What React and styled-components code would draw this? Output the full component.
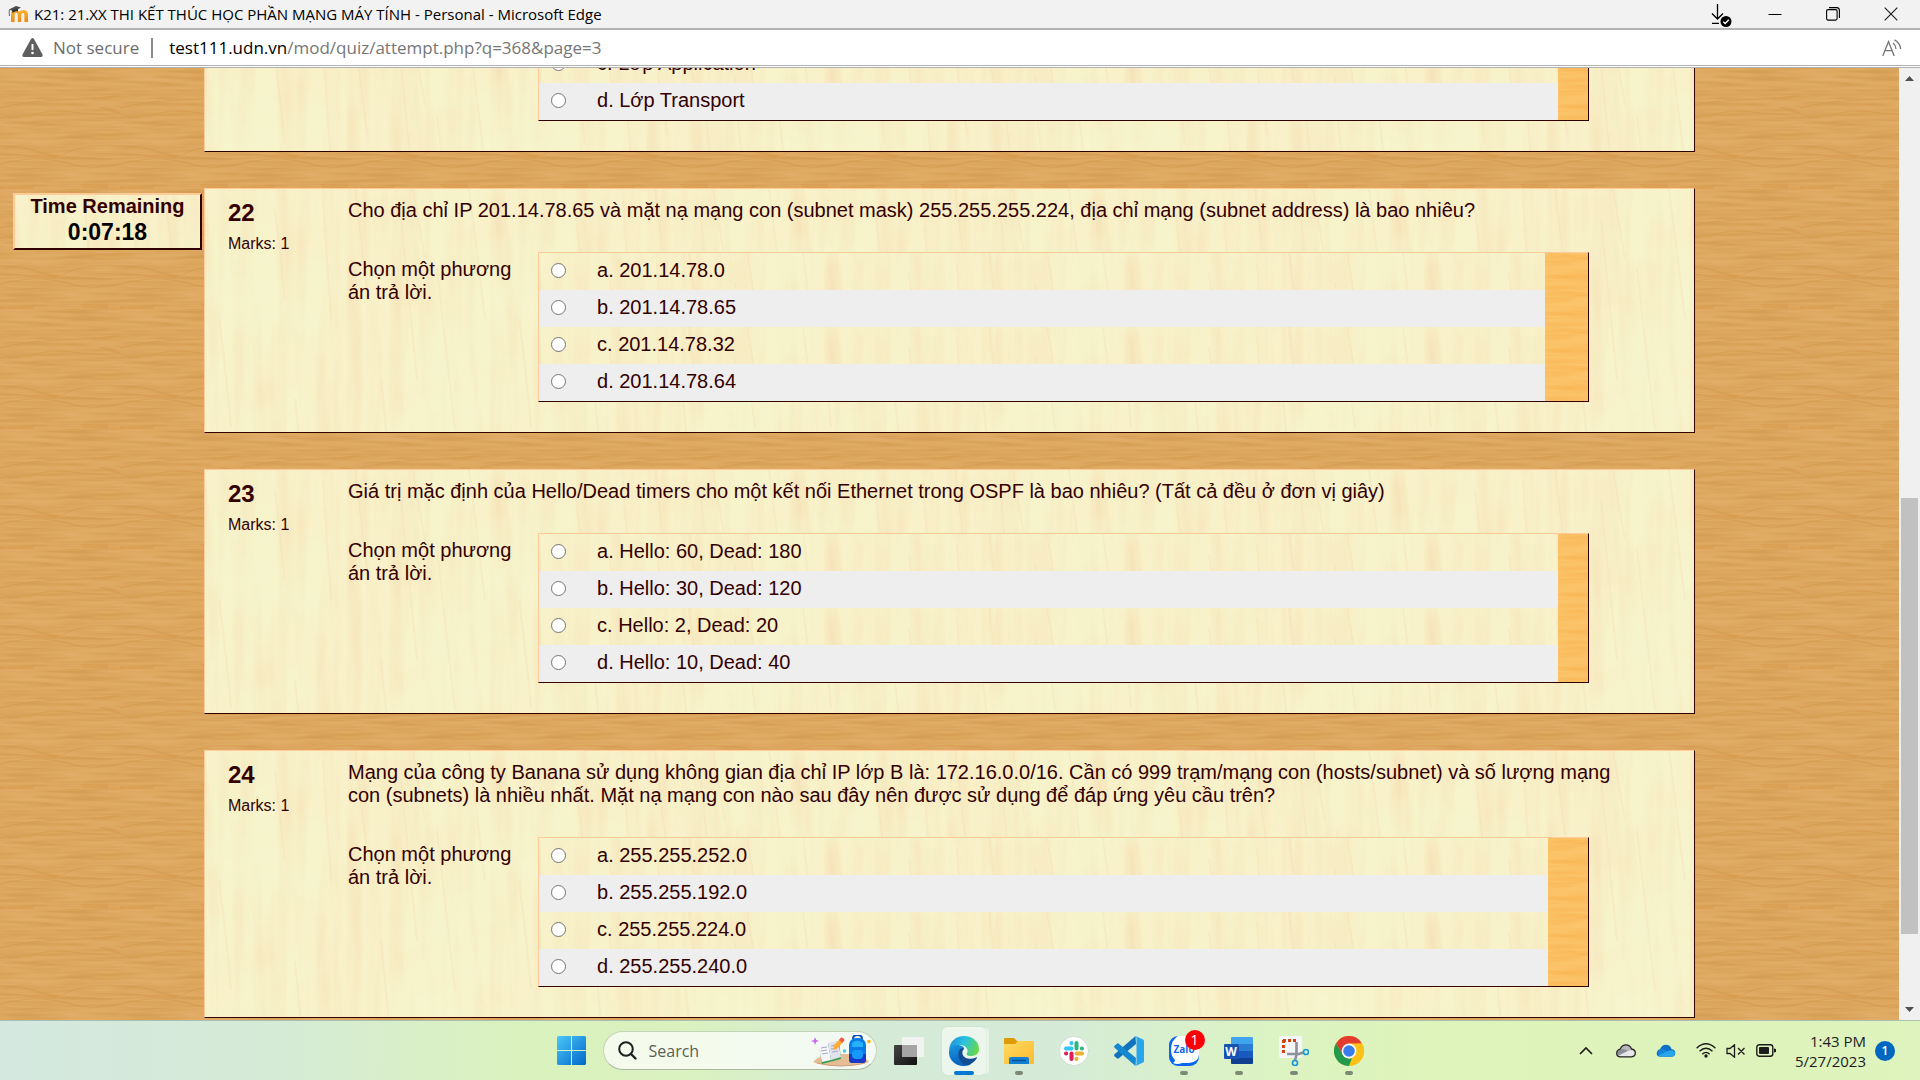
import React from "react";
import styled, { createGlobalStyle } from "styled-components";

/* ---------- tiled wood textures ---------- */

const tile = (svg) => `url("data:image/svg+xml,${encodeURIComponent(svg)}")`;

const oak = tile(`<svg xmlns="http://www.w3.org/2000/svg" width="120" height="120">
<filter id="d" x="0" y="0" width="100%" height="100%" color-interpolation-filters="sRGB"><feTurbulence type="fractalNoise" baseFrequency="0.017 0.3" numOctaves="3" seed="4" stitchTiles="stitch"/><feColorMatrix values="0 0 0 0 .80  0 0 0 0 .57  0 0 0 0 .27  1.3 0 0 0 -0.5"/></filter>
<filter id="l" x="0" y="0" width="100%" height="100%" color-interpolation-filters="sRGB"><feTurbulence type="fractalNoise" baseFrequency="0.017 0.1" numOctaves="2" seed="9" stitchTiles="stitch"/><feColorMatrix values="0 0 0 0 .89  0 0 0 0 .69  0 0 0 0 .43  0 1.4 0 0 -0.5"/></filter>
<rect width="120" height="120" fill="#dfa961"/>
<rect width="120" height="120" filter="url(#l)"/>
<rect width="120" height="120" filter="url(#d)"/>
<g fill="none" stroke="#cf9340" stroke-opacity=".45" stroke-width="1">
<path d="M0 48Q25 42 45 41T100 38Q112 36 120 36M0 54Q12 59 34 54T80 53Q104 56 120 54"/>
<path d="M0 86Q20 85 38 92Q54 96 60 97Q68 90 88 87T120 86M0 104Q24 98 42 99T76 105T120 104"/></g>
<path d="M20 97Q44 91 61 95L55 98Q40 98 20 97ZM98 47Q112 47 120 52V54Q106 52 98 47ZM0 6H34V9H0ZM80 4H108V8H82Z" fill="#d4933f" fill-opacity=".35"/>
</svg>`);

const maple = tile(`<svg xmlns="http://www.w3.org/2000/svg" width="300" height="300">
<filter id="a" x="0" y="0" width="100%" height="100%" color-interpolation-filters="sRGB"><feTurbulence type="fractalNoise" baseFrequency="0.07 0.0067" numOctaves="3" seed="12" stitchTiles="stitch"/><feColorMatrix values="0 0 0 0 .96  0 0 0 0 .85  0 0 0 0 .68  1.2 0 0 0 -0.48"/></filter>
<filter id="b" x="0" y="0" width="100%" height="100%" color-interpolation-filters="sRGB"><feTurbulence type="fractalNoise" baseFrequency="0.01 0.013" numOctaves="3" seed="6" stitchTiles="stitch"/><feColorMatrix values="0 0 0 0 .96  0 0 0 0 .97  0 0 0 0 .81  0 1.4 0 0 -0.45"/></filter>
<rect width="300" height="300" fill="#f8f1c9"/>
<rect width="300" height="300" filter="url(#a)"/>
<rect width="300" height="300" filter="url(#b)"/>
<g fill="none" stroke="#f3cfa4" stroke-opacity=".2" stroke-width="2">
<path d="M14 130Q22 190 26 238M70 20L80 110M118 10L126 130M150 0L162 100M196 30L212 190M232 80L250 240M264 0L280 130M176 190L186 290M208 0L220 70M90 210L98 290"/></g>
</svg>`);

const amber = tile(`<svg xmlns="http://www.w3.org/2000/svg" width="120" height="37">
<filter id="c" x="0" y="0" width="100%" height="100%" color-interpolation-filters="sRGB"><feTurbulence type="fractalNoise" baseFrequency="0.017 0.27" numOctaves="3" seed="3" stitchTiles="stitch"/><feColorMatrix values="0 0 0 0 .97  0 0 0 0 .69  0 0 0 0 .29  1.3 0 0 0 -0.5"/></filter>
<rect width="120" height="37" fill="#fbc46a"/><rect width="120" height="37" filter="url(#c)"/>
</svg>`);

const ui = `"Open Sans", "Noto Sans", sans-serif`;

const GlobalStyle = createGlobalStyle`
  * { box-sizing: border-box; }
  body { margin: 0; overflow: hidden; }
  button { font: inherit; color: inherit; background: none; border: 0; padding: 0; margin: 0; display: flex; align-items: center; justify-content: center; }
`;

/* ---------- window frame ---------- */

const Window = styled.div`
  display: flex;
  flex-direction: column;
  height: 100vh;
  font-family: "Liberation Sans", Arial, sans-serif;
  color: #330000;
`;

const TitleBar = styled.header`
  flex: none;
  display: flex;
  align-items: center;
  height: 30px;
  padding-left: 8px;
  background: #f2f2f2;
  border-bottom: 2px solid #b4b4b4;
`;

const WindowTitle = styled.h1`
  flex: 1;
  margin: 0 0 0 5px;
  font: 400 15px/20px ${ui};
  color: #000;
`;

const WindowButton = styled.button`
  width: ${(p) => p.$width || 58}px;
  height: 28px;
`;

const AddressBar = styled.div`
  flex: none;
  display: flex;
  align-items: center;
  height: 38px;
  padding: 0 18px 0 22px;
  background: #fff;
  border-bottom: 3px double #b0b0b0;
  font: 400 17px/24px ${ui};
  color: #6d6d6d;
`;

const Security = styled.span`
  margin-left: 10px;
  padding-right: 12px;
  border-right: 2px solid #8a8a8a;
  line-height: 20px;
`;

const Url = styled.a`
  flex: 1;
  margin-left: 16px;
  color: #767676;
  text-decoration: none;
`;

const Host = styled.span`
  color: #000;
`;

/* ---------- page ---------- */

const Viewport = styled.div`
  flex: 1;
  min-height: 0;
  display: flex;
`;

const Page = styled.main`
  position: relative;
  flex: 1;
  display: flex;
  flex-direction: column;
  justify-content: flex-end;
  gap: 36px;
  padding: 0 204px 2px;
  overflow: hidden;
  background: ${oak} 0 112px;
`;

const Question = styled.section`
  flex: none;
  display: flex;
  padding: 10px 54px 30px 23px;
  border: 1px solid;
  border-color: #ffcc99 #330000 #330000 #ffcc99;
  background: ${maple};
`;

const Info = styled.div`
  width: 120px;
`;

const Number = styled.h2`
  margin: 0 0 8px;
  font-size: 24px;
  line-height: 28px;
`;

const Marks = styled.div`
  font-size: 16px;
  line-height: 18px;
`;

const Content = styled.div`
  flex: 1;
  font-size: 20px;
  line-height: 23px;
`;

const QuestionText = styled.p`
  margin: 0 0 30px;
`;

const AnswerArea = styled.div`
  display: flex;
  margin-right: 51px;
`;

const Prompt = styled.div`
  width: 190px;
  padding: 6px 20px 0 0;
`;

const AnswerBox = styled.div`
  flex: 1;
  display: flex;
  border: 1px solid;
  border-color: #ffcc99 #330000 #330000 #ffcc99;
`;

const Options = styled.div`
  flex: 1;
`;

const Option = styled.label`
  display: flex;
  align-items: center;
  height: 37px;
  padding: 0 0 2px 12px;
  background: ${(p) => (p.$shaded ? "#eeeeee" : maple)};
`;

const Radio = styled.input`
  appearance: none;
  width: 15px;
  height: 15px;
  margin: 0 31px 0 0;
  border: 1px solid #767676;
  border-radius: 50%;
  background: #fff;
`;

const Feedback = styled.div`
  width: ${(p) => p.$width}px;
  background: ${amber};
`;

const Timer = styled.aside`
  position: absolute;
  top: 125px;
  left: 13px;
  width: 189px;
  padding: 0 0 2px;
  border: 2px solid;
  border-color: #ffcc99 #330000 #330000 #ffcc99;
  background: ${maple};
  font-weight: 700;
  text-align: center;
`;

const TimerLabel = styled.div`
  font-size: 20px;
  line-height: 23px;
`;

const TimerValue = styled.div`
  font-size: 23px;
  line-height: 28px;
  color: #000;
`;

const ScrollBar = styled.div`
  flex: none;
  display: flex;
  flex-direction: column;
  align-items: center;
  width: 21px;
  background: #f0f0f0;
`;

const ScrollButton = styled.button`
  width: 21px;
  height: 21px;
`;

const Track = styled.div`
  flex: 1;
  display: flex;
  flex-direction: column;
  width: 17px;
  &::before { content: ""; flex: 409; }
  &::after { content: ""; flex: 65; }
`;

const Thumb = styled.div`
  flex: 436;
  background: #c1c1c1;
`;

/* ---------- taskbar ---------- */

const Taskbar = styled.footer`
  flex: none;
  display: grid;
  grid-template-columns: 1fr auto 1fr;
  align-items: center;
  height: 60px;
  border-top: 1px solid #aebfb0;
  background: linear-gradient(92deg, #d4e8e0 0%, #d6ebd5 15%, #daf2bd 27%, #daf1c0 36%, #d5ebd8 45%, #d5ebd8 55%, #dcf3c3 66%, #dff4ba 75%, #def3bd 100%);
  font-family: ${ui};
  color: #1c1c1c;
`;

const Apps = styled.nav`
  grid-column: 2;
  display: flex;
  align-items: center;
  gap: 5px;
`;

const AppButton = styled.button`
  position: relative;
  width: 50px;
  height: 48px;
  border-radius: 5px;
  ${(p) => p.$active && "width: 44px; margin: 0 3px; background: rgba(255,255,255,.55); box-shadow: 4px 0 0 -1px rgba(255,255,255,.4), 0 0 1px #a9b7a9;"}
  &::after {
    content: "";
    position: absolute;
    bottom: 0;
    left: 50%;
    width: ${(p) => (p.$active ? 20 : 8)}px;
    height: 4px;
    border-radius: 2px;
    background: ${(p) => (p.$active ? "#0078d4" : "#7d8a73")};
    transform: translateX(-50%);
    display: ${(p) => (p.$active || p.$running ? "block" : "none")};
  }
`;

const Search = styled.label`
  display: flex;
  align-items: center;
  width: 274px;
  height: 39px;
  margin: 0 2px 0 1px;
  padding: 0 5px 0 14px;
  border: 1px solid #c3d3b6;
  border-bottom-color: #a9b99f;
  border-radius: 20px;
  background: rgba(255, 255, 255, 0.7);
`;

const SearchInput = styled.input`
  flex: 1;
  min-width: 0;
  padding: 0 0 0 12px;
  border: 0;
  outline: 0;
  background: none;
  font: 400 16px/24px ${ui};
  &::placeholder { color: #5a6054; opacity: 1; }
`;

const Badge = styled.span`
  position: absolute;
  top: 3px;
  right: 4px;
  width: 20px;
  height: 20px;
  border-radius: 50%;
  background: #fb0007;
  color: #fff;
  font-size: 14px;
  line-height: 20px;
`;

const Tray = styled.div`
  grid-column: 3;
  justify-self: end;
  display: flex;
  align-items: center;
  padding-right: 25px;
`;

const TrayButton = styled.button`
  width: 40px;
  height: 40px;
`;

const TrayGroup = styled.button`
  gap: 10px;
  margin: 0 10px;
`;

const Clock = styled.time`
  width: 80px;
  margin-right: 9px;
  font-size: 15px;
  line-height: 20px;
  text-align: right;
`;

const Notice = styled.button`
  width: 20px;
  height: 20px;
  border-radius: 50%;
  background: #0067c0;
  color: #fff;
  font-size: 12px;
  font-weight: 600;
`;

/* ---------- drawings ---------- */

const MoodleIcon = () => (
  <svg width="21" height="18" viewBox="0 0 21 18" aria-hidden="true">
    <defs><linearGradient id="md" x2="0" y2="1"><stop stopColor="#f9b233" /><stop offset="1" stopColor="#ef8a12" /></linearGradient></defs>
    <path d="M3 17V9.500Q3 5 7.500 5Q10 5 11.300 6.800Q13 5 15.300 5Q20 5 20 9.500V17H16.400V10Q16.400 8 14.800 8T13.200 10V17H9.800V10Q9.800 8 8.200 8T6.600 10V17Z" fill="url(#md)" />
    <path d="M1 4.500L8 1L13 2.500L6 6.500Z" fill="#4b4b4b" />
    <path d="M4 5L10 4V6.500Q7 5.500 4.500 8Z" fill="#333" />
    <path d="M1.500 4.500Q.8 8 1.500 11" stroke="#666" fill="none" />
  </svg>
);

const DownloadIcon = () => (
  <svg width="24" height="26" viewBox="0 0 24 26" fill="none" stroke="#000" strokeWidth="1.300" aria-hidden="true">
    <path d="M8.500 3V18M3 12.500L8.500 18L14 12.500M3 22.300H10" />
    <circle cx="17" cy="20.500" r="5.500" fill="#000" stroke="none" />
    <path d="M14.300 20.700L16.200 22.600L19.800 18.800" stroke="#fff" strokeWidth="1.400" />
  </svg>
);

const MinimizeIcon = () => (
  <svg width="14" height="14" aria-hidden="true"><path d="M.5 7.500H13.500" stroke="#000" /></svg>
);

const RestoreIcon = () => (
  <svg width="14" height="14" viewBox="0 0 14 14" fill="none" stroke="#000" strokeWidth="1.100" aria-hidden="true">
    <rect x=".6" y="2.600" width="10.500" height="10.500" rx="1.500" />
    <path d="M3 .6H10.500Q13.400 .6 13.400 3.500V11" />
  </svg>
);

const CloseIcon = () => (
  <svg width="14" height="14" aria-hidden="true"><path d="M.7 .7L13.300 13.300M13.300 .7L.7 13.300" stroke="#222" strokeWidth="1.200" /></svg>
);

const WarningIcon = () => (
  <svg width="21" height="19" viewBox="0 0 21 19" aria-hidden="true">
    <path d="M9 1Q10.500-.8 12 1L20.500 16.500Q21 19 19 19H2Q0 19 .5 16.500Z" fill="#5f5f5f" />
    <path d="M10.500 6V12" stroke="#fff" strokeWidth="2" /><circle cx="10.500" cy="15" r="1.300" fill="#fff" />
  </svg>
);

const ReadAloudIcon = () => (
  <svg width="20" height="18" viewBox="0 0 20 18" fill="none" stroke="#767676" strokeWidth="1.300" aria-hidden="true">
    <path d="M.8 17L6.500 2.500L12.200 17M3 11.700H10M11 4Q13.700 6 14 10M12.500 .8Q18 3.500 18.700 10" />
  </svg>
);

const Arrow = ({ down }) => (
  <svg width="9" height="5" aria-hidden="true"><path d={down ? "M0 0H9L4.500 5Z" : "M0 5H9L4.500 0Z"} fill="#505050" /></svg>
);

const WindowsIcon = () => (
  <svg width="29" height="29" aria-hidden="true">
    <defs><linearGradient id="win" x1="0" y1="0" x2="1" y2="1"><stop stopColor="#4cc8fb" /><stop offset="1" stopColor="#0067c8" /></linearGradient></defs>
    <path d="M1 0H14V14H0V1ZM15 0H28L29 1V14H15ZM0 15H14V29H1L0 28ZM15 15H29V28L28 29H15Z" fill="url(#win)" />
  </svg>
);

const SearchIcon = () => (
  <svg width="19" height="19" viewBox="0 0 19 19" fill="none" stroke="#1f1f1f" strokeLinecap="round" aria-hidden="true">
    <circle cx="8" cy="8" r="6.800" strokeWidth="2" /><path d="M13 13L17.500 17.500" strokeWidth="2.400" />
  </svg>
);

const SchoolArt = () => (
  <svg width="60" height="32" viewBox="0 0 60 32" aria-hidden="true">
    <path d="M2 27Q8 20 20 19H46Q54 22 58 27Q50 31 30 31T2 27Z" fill="#e5bd94" />
    <path d="M6 28Q18 31 30 31T54 28" fill="none" stroke="#cda078" />
    <path d="M8 11L28 6L30 24L11 29Z" fill="#3d9b52" />
    <path d="M7 9L17 8L20 25L11 27Z" fill="#f5f5fa" /><path d="M17 8L27 6L30 22L20 25Z" fill="#e0e2ef" />
    <path d="M10 13L16 12M10 16L16 15M11 19L17 18M20 11L26 10M20 14L26 13M21 17L27 16" stroke="#a6a9bd" />
    <path d="M22 15L23 10L29 4L32 7L26 14Z" fill="#ffad32" /><path d="M28 5L30 2.500Q33 2 33.500 5L31.500 8Z" fill="#f05b49" />
    <path d="M42 4Q42 0 46.500 0T51 4" fill="none" stroke="#124bb5" strokeWidth="2" />
    <rect x="38" y="3" width="17" height="25" rx="7" fill="#087be8" />
    <path d="M38 19V25Q38 28 41 28H52Q55 28 55 25V19Z" fill="#1838c8" />
    <path d="M41 8Q46 3 52 8V12H41Z" fill="#25b2fa" /><rect x="41" y="15" width="11" height="9" rx="4" fill="#1598fa" />
    <path d="M4 2L5.200 5L8 6L5.200 7L4 10L3 7L0 6L3 5Z" fill="#c66af0" /><circle cx="58" cy="6.500" r="1.800" fill="#fcb315" /><circle cx="33.500" cy="16" r="1.700" fill="#43c9e8" />
  </svg>
);

const TaskViewIcon = () => (
  <svg width="30" height="28" aria-hidden="true">
    <defs><linearGradient id="tv" x2="1" y2="1"><stop stopColor="#444" /><stop offset="1" stopColor="#111" /></linearGradient></defs>
    <rect y="8" width="23" height="20" rx="1" fill="url(#tv)" />
    <rect x="8" width="22" height="20" rx="1" fill="#f4f4f4" fillOpacity=".9" /><path d="M8 8H23V20H8Z" fill="#a5a5a5" />
  </svg>
);

const EdgeIcon = () => (
  <svg width="30" height="30" viewBox="0 0 30 30" aria-hidden="true">
    <defs>
      <linearGradient id="e1" x1="0" y1=".2" x2="1" y2=".5"><stop stopColor="#1b8fdc" /><stop offset=".5" stopColor="#2bc2df" /><stop offset="1" stopColor="#66d84a" /></linearGradient>
      <linearGradient id="e2" x1="0" y1="0" x2=".3" y2="1"><stop stopColor="#1a97df" /><stop offset="1" stopColor="#0b62bd" /></linearGradient>
    </defs>
    <path d="M0 14C1 5 7 0 15 0C24 0 30 6 30 13C30 18 26 20 22 20C18 20 17 18.500 18 17C20 14 17 9 11 9C6 9 2 11 0 14Z" fill="url(#e1)" />
    <path d="M0 15C1 10 6 8 10 9C14 10 16 12 15 13C11 15 11 21 15 25C18 28 21 28 22 28C19 30 16 30 14 30C6 30 -1 23 0 15Z" fill="url(#e2)" />
    <path d="M11 13C7 19 11 29 19 29C23 28 26 25 28 22C28 21.300 27.500 21 27 21.500C22 24 15 23 13.500 18C13 15.500 14 13.500 15 13C14 12 12 12 11 13Z" fill="#124d91" />
  </svg>
);

const FolderIcon = () => (
  <svg width="30" height="28" aria-hidden="true">
    <defs><linearGradient id="fo" x2="1" y2="1"><stop stopColor="#ffdb62" /><stop offset="1" stopColor="#fcb92f" /></linearGradient></defs>
    <path d="M0 2Q0 1 1 1H10L13 4H29Q30 4 30 5V10H0Z" fill="#dd9b08" />
    <path d="M0 7H11L14 4H29Q30 4 30 5V26Q30 27 29 27H1Q0 27 0 26Z" fill="url(#fo)" />
    <path d="M5 27V22Q5 20 7 20H23Q25 20 25 22V27Z" fill="#117fd2" /><path d="M8 23.500H22" stroke="#075297" strokeWidth="1.500" />
  </svg>
);

const SlackIcon = () => (
  <svg width="30" height="30" viewBox="0 0 30 30" strokeWidth="4" strokeLinecap="round" aria-hidden="true">
    <circle cx="15" cy="15" r="14.500" fill="#fff" stroke="#ccd8cc" strokeWidth=".8" />
    <path d="M12.500 7V7.200M7 12.500H12.500" stroke="#36c5f0" /><path d="M17.500 7V12.500M23 12.500H22.800" stroke="#2eb67d" />
    <path d="M17.500 17.500H23M17.500 23V22.800" stroke="#ecb22e" /><path d="M12.500 17.500V23M7 17.500H7.200" stroke="#e01e5a" />
  </svg>
);

const CodeIcon = () => (
  <svg width="30" height="30" viewBox="0 0 30 30" aria-hidden="true">
    <path d="M21.500 0L22 8L4.500 22.500Q3.500 23 2.500 22L.5 20.200Q-.2 19.200 .5 18.300Z" fill="#0f74bd" />
    <path d="M21.500 30L22 22L4.500 7.500Q3.500 7 2.500 8L.5 9.800Q-.2 10.800 .5 11.700Z" fill="#1588cf" />
    <path d="M21.500 0L29 3.500Q30 4 30 5V25Q30 26 29 26.500L21.500 30Q22.500 29 22.500 27.500V2.500Q22.500 1 21.500 0Z" fill="#28a5ed" />
  </svg>
);

const ZaloLabel = styled.span`
  position: absolute;
  top: 15px;
  left: 15px;
  color: #1268e8;
  font: 700 10px/14px ${ui};
`;

const ZaloIcon = () => (
  <svg width="30" height="30" viewBox="0 0 30 30" aria-hidden="true">
    <rect width="30" height="30" rx="9" fill="#0768ed" />
    <path d="M9 0H21Q30 0 30 9V18Q30 26 20 27H13Q8 29 4 27Q6 26 6 24Q2 20 2 14Q2 4 9 0Z" fill="#fff" />
  </svg>
);

const WordLabel = styled.span`
  position: absolute;
  left: 10px;
  top: 17px;
  width: 15px;
  height: 15px;
  border-radius: 1px;
  background: #1852b5;
  color: #fff;
  font: 700 12px/15px ${ui};
`;

const WordIcon = () => (
  <svg width="30" height="28" aria-hidden="true">
    <path d="M7 1Q7 0 8 0H28Q29 0 29 1V7H7Z" fill="#41a5ee" /><path d="M7 7H29V14H7Z" fill="#2b7cd3" />
    <path d="M7 14H29V21H7Z" fill="#185abd" /><path d="M7 21H29V26Q29 27 28 27H8Q7 27 7 26Z" fill="#103f91" />
  </svg>
);

const SnipIcon = () => (
  <svg width="30" height="30" viewBox="0 0 30 30" aria-hidden="true">
    <rect width="23" height="22" rx="2" fill="#f6f6f8" />
    <path d="M4 4.500H17M4.500 4V17" stroke="#d24310" strokeWidth="3" strokeDasharray="3 2" fill="none" />
    <path d="M17.500 6V19L16 24M8 18H20L24 16.500" fill="none" stroke="#8b929b" strokeWidth="2.600" />
    <circle cx="27" cy="16" r="2.500" fill="none" stroke="#1798dc" strokeWidth="1.700" /><circle cx="16" cy="27" r="2.500" fill="none" stroke="#1798dc" strokeWidth="1.700" />
  </svg>
);

const ChromeIcon = () => (
  <svg width="30" height="30" viewBox="0 0 30 30" aria-hidden="true">
    <circle cx="15" cy="15" r="15" fill="#fbc116" />
    <path d="M2 7.500A15 15 0 0 1 28 7.500L15 8L8.500 18.700Z" fill="#e33b2e" />
    <path d="M2 7.500L8.800 18.700A7.500 7.500 0 0 0 18 22L15 30A15 15 0 0 1 2 7.500Z" fill="#229a4c" />
    <path d="M15 7.500H28A15 15 0 0 1 15 30L21.500 18.700Z" fill="#fbc116" />
    <circle cx="15" cy="15" r="7.400" fill="#fff" /><circle cx="15" cy="15" r="5.800" fill="#3a7cec" />
  </svg>
);

const ChevronUp = () => (
  <svg width="14" height="9" aria-hidden="true"><path d="M1 8L7 2L13 8" fill="none" stroke="#1c1c1c" strokeWidth="1.600" /></svg>
);

const CloudIcon = ({ gray }) => (
  <svg width="20" height="14" viewBox="0 0 20 14" aria-hidden="true">
    <path d="M4.500 12.800Q.8 12.800 .7 9.500Q.8 6 4 5.200Q6 .8 10 .8T15.500 5Q19.300 5.500 19.300 9T15.500 12.800Z" fill={gray ? "#b9b9bd" : "#0f6fc6"} />
    <path d="M4 5.500Q8 4 12 7L3 12Q0 9 4 5.500Z" fill={gray ? "#8f8f94" : "#1683d9"} />
    <path d="M2.500 11.500L12 7Q16 5 19 8Q19 12.500 15.500 12.500H5Q3.500 12.500 2.500 11.500Z" fill={gray ? "#e8e8ec" : "#28a8ea"} />
    {gray && <path d="M4.500 12.800Q.8 12.800 .7 9.500Q.8 6 4 5.200Q6 .8 10 .8T15.500 5Q19.300 5.500 19.300 9T15.500 12.800Z" fill="none" stroke="#242424" strokeWidth="1.300" />}
  </svg>
);

const WifiIcon = () => (
  <svg width="20" height="15" viewBox="0 0 20 15" fill="none" stroke="#1c1c1c" strokeWidth="1.400" aria-hidden="true">
    <path d="M.6 5.200Q10-3.500 19.400 5.200M3.500 8.300Q10 2 16.500 8.300M6.300 11.200Q10 7.500 13.700 11.200" /><circle cx="10" cy="13" r="1.700" fill="#1c1c1c" stroke="none" />
  </svg>
);

const MuteIcon = () => (
  <svg width="20" height="14" viewBox="0 0 20 14" fill="none" stroke="#1c1c1c" strokeWidth="1.300" aria-hidden="true">
    <path d="M1 4.500H4L8.500 .8V13.200L4 9.500H1ZM12 4L18.500 10.500M18.500 4L12 10.500" />
  </svg>
);

const BatteryIcon = () => (
  <svg width="20" height="13" viewBox="0 0 20 13" aria-hidden="true">
    <rect x=".8" y=".8" width="16" height="11.400" rx="2.500" fill="none" stroke="#1c1c1c" strokeWidth="1.400" />
    <rect x="3" y="3" width="10" height="7" rx="1" fill="#1c1c1c" /><path d="M18 4.500L20 5V8L18 8.500Z" fill="#1c1c1c" />
  </svg>
);

/* ---------- data ---------- */

const questions = [
  { id: 21, first: 2, feedback: 30, options: ["Lớp Application", "Lớp Transport"] },
  {
    id: 22,
    text: "Cho địa chỉ IP 201.14.78.65 và mặt nạ mạng con (subnet mask) 255.255.255.224, địa chỉ mạng (subnet address) là bao nhiêu?",
    feedback: 43,
    options: ["201.14.78.0", "201.14.78.65", "201.14.78.32", "201.14.78.64"],
  },
  {
    id: 23,
    text: "Giá trị mặc định của Hello/Dead timers cho một kết nối Ethernet trong OSPF là bao nhiêu? (Tất cả đều ở đơn vị giây)",
    feedback: 30,
    options: ["Hello: 60, Dead: 180", "Hello: 30, Dead: 120", "Hello: 2, Dead: 20", "Hello: 10, Dead: 40"],
  },
  {
    id: 24,
    text: "Mạng của công ty Banana sử dụng không gian địa chỉ IP lớp B là: 172.16.0.0/16. Cần có 999 trạm/mạng con (hosts/subnet) và số lượng mạng con (subnets) là nhiều nhất. Mặt nạ mạng con nào sau đây nên được sử dụng để đáp ứng yêu cầu trên?",
    feedback: 40,
    options: ["255.255.252.0", "255.255.192.0", "255.255.224.0", "255.255.240.0"],
  },
];

function QuestionCard({ id, text, options, feedback, first = 0 }) {
  return (
    <Question>
      <Info>
        {text && (
          <>
            <Number>{id}</Number>
            <Marks>Marks: 1</Marks>
          </>
        )}
      </Info>
      <Content>
        {text && <QuestionText>{text}</QuestionText>}
        <AnswerArea>
          <Prompt>{text && "Chọn một phương án trả lời."}</Prompt>
          <AnswerBox>
            <Options role="radiogroup">
              {options.map((option, i) => (
                <Option key={option} $shaded={(i + first) % 2 === 1}>
                  <Radio type="radio" name={`q${id}`} />
                  {"abcd"[i + first]}. {option}
                </Option>
              ))}
            </Options>
            <Feedback $width={feedback} />
          </AnswerBox>
        </AnswerArea>
      </Content>
    </Question>
  );
}

export default function App() {
  return (
    <Window>
      <GlobalStyle />
      <TitleBar>
        <MoodleIcon />
        <WindowTitle>K21: 21.XX THI KẾT THÚC HỌC PHẦN MẠNG MÁY TÍNH - Personal - Microsoft Edge</WindowTitle>
        <WindowButton $width={50} aria-label="Downloads"><DownloadIcon /></WindowButton>
        <WindowButton aria-label="Minimize"><MinimizeIcon /></WindowButton>
        <WindowButton aria-label="Restore"><RestoreIcon /></WindowButton>
        <WindowButton aria-label="Close"><CloseIcon /></WindowButton>
      </TitleBar>
      <AddressBar>
        <WarningIcon />
        <Security>Not secure</Security>
        <Url href="#">
          <Host>test111.udn.vn</Host>/mod/quiz/attempt.php?q=368&amp;page=3
        </Url>
        <button aria-label="Read aloud"><ReadAloudIcon /></button>
      </AddressBar>
      <Viewport>
        <Page>
          {questions.map((q) => (
            <QuestionCard key={q.id} {...q} />
          ))}
          <Timer>
            <TimerLabel>Time Remaining</TimerLabel>
            <TimerValue>0:07:18</TimerValue>
          </Timer>
        </Page>
        <ScrollBar>
          <ScrollButton aria-label="Scroll up"><Arrow /></ScrollButton>
          <Track><Thumb /></Track>
          <ScrollButton aria-label="Scroll down"><Arrow down /></ScrollButton>
        </ScrollBar>
      </Viewport>
      <Taskbar>
        <Apps>
          <AppButton aria-label="Start"><WindowsIcon /></AppButton>
          <Search>
            <SearchIcon />
            <SearchInput placeholder="Search" aria-label="Search" />
            <SchoolArt />
          </Search>
          <AppButton aria-label="Task view"><TaskViewIcon /></AppButton>
          <AppButton $active aria-label="Edge"><EdgeIcon /></AppButton>
          <AppButton $running aria-label="File Explorer"><FolderIcon /></AppButton>
          <AppButton aria-label="Slack"><SlackIcon /></AppButton>
          <AppButton aria-label="Visual Studio Code"><CodeIcon /></AppButton>
          <AppButton $running>
            <ZaloIcon />
            <ZaloLabel>Zalo</ZaloLabel>
            <Badge>1</Badge>
          </AppButton>
          <AppButton $running>
            <WordIcon />
            <WordLabel>W</WordLabel>
          </AppButton>
          <AppButton $running aria-label="Snipping Tool"><SnipIcon /></AppButton>
          <AppButton $running aria-label="Chrome"><ChromeIcon /></AppButton>
        </Apps>
        <Tray>
          <TrayButton aria-label="Show hidden icons"><ChevronUp /></TrayButton>
          <TrayButton aria-label="Cloud drive"><CloudIcon gray /></TrayButton>
          <TrayButton aria-label="OneDrive"><CloudIcon /></TrayButton>
          <TrayGroup aria-label="Network, volume and battery">
            <WifiIcon />
            <MuteIcon />
            <BatteryIcon />
          </TrayGroup>
          <Clock>
            1:43 PM
            <br />
            5/27/2023
          </Clock>
          <Notice>1</Notice>
        </Tray>
      </Taskbar>
    </Window>
  );
}
